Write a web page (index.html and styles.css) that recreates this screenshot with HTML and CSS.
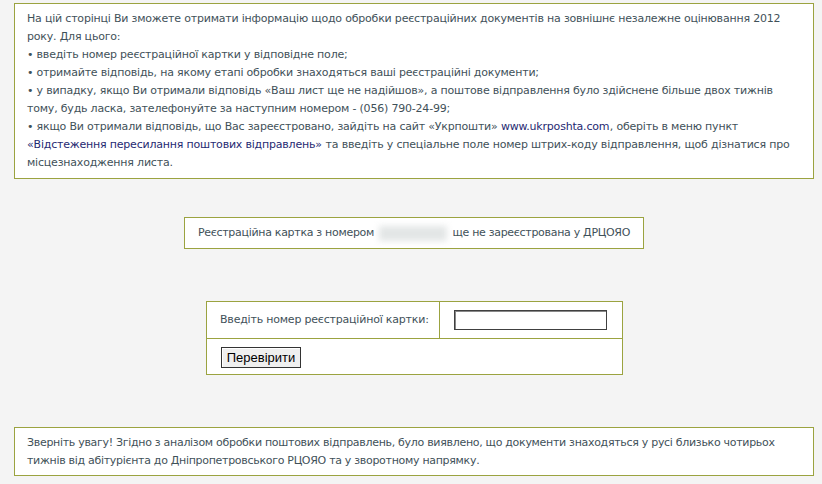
FILE: index.html
```html
<!DOCTYPE html>
<html lang="uk">
<head>
<meta charset="utf-8">
<title>Перевірка реєстраційної картки</title>
<link rel="stylesheet" href="styles.css">
</head>
<body>
<div class="page">
  <div class="box info">
    На цій сторінці Ви зможете отримати інформацію щодо обробки реєстраційних документів на зовнішнє незалежне оцінювання 2012 року. Для цього:<br>
    • введіть номер реєстраційної картки у відповідне поле;<br>
    • отримайте відповідь, на якому етапі обробки знаходяться ваші реєстраційні документи;<br>
    • у випадку, якщо Ви отримали відповідь «Ваш лист ще не надійшов», а поштове відправлення було здійснене більше двох тижнів тому, будь ласка, зателефонуйте за наступним номером - (056) 790-24-99;<br>
    • якщо Ви отримали відповідь, що Вас зареєстровано, зайдіть на сайт «Укрпошти» <a class="link" href="#">www.ukrposhta.com</a>, оберіть в меню пункт <span class="link">«Відстеження пересилання поштових відправлень»</span> та введіть у спеціальне поле номер штрих-коду відправлення, щоб дізнатися про місцезнаходження листа.
  </div>

  <div class="box status">Реєстраційна картка з номером <span class="blurred"></span> ще не зареєстрована у ДРЦОЯО</div>

  <table class="form">
    <tr>
      <td class="label">Введіть номер реєстраційної картки:</td>
      <td class="field"><input class="input" type="text"></td>
    </tr>
    <tr>
      <td class="actions" colspan="2"><button class="btn" type="button">Перевірити</button></td>
    </tr>
  </table>

  <div class="box note">Зверніть увагу! Згідно з аналізом обробки поштових відправлень, було виявлено, що документи знаходяться у русі близько чотирьох тижнів від абітурієнта до Дніпропетровського РЦОЯО та у зворотному напрямку.</div>
</div>
</body>
</html>
```

FILE: styles.css
```css
html, body {
  margin: 0;
  padding: 0;
  background: #f4f4f4;
}
.page {
  padding: 3px 8px 0 14px;
  font-family: "DejaVu Sans", Verdana, sans-serif;
  font-size: 11px;
  letter-spacing: -0.2px;
  line-height: 18px;
  color: #3f5159;
}
.box {
  background: #fff;
  border: 1px solid #9ba340;
  box-sizing: border-box;
}
.info {
  width: 800px;
  padding: 6px 12px 6px 12px;
}
.link {
  color: #1f2a72;
  text-decoration: none;
  margin-right: 0.5px;
}
.status {
  width: 460px;
  margin: 38px 0 0 170px;
  height: 32px;
  line-height: 30px;
  text-align: center;
  letter-spacing: -0.3px;
}
.blurred {
  display: inline-block;
  width: 68px;
  height: 15px;
  vertical-align: middle;
  background: #e3e6e6;
  filter: blur(3px);
  margin: 0 2px;
}
.form {
  margin: 52px 0 0 192px;
  width: 417px;
  border-collapse: collapse;
  background: #fff;
  border: 1px solid #9ba340;
}
.form td {
  border: 1px solid #9ba340;
  padding: 0;
}
.label {
  width: 219px;
  height: 36px;
  padding-left: 13px !important;
}
.field {
  padding-left: 14px !important;
}
.input {
  display: block;
  box-sizing: border-box;
  width: 153px;
  height: 20px;
  border: 1px solid #404040;
  box-shadow: inset 1px 1px 0 #888;
  padding: 0;
  margin: 0;
  background: #fff;
}
.actions {
  height: 35px;
  padding-left: 14px !important;
}
.btn {
  display: block;
  box-sizing: border-box;
  width: 80px;
  height: 21px;
  padding: 0;
  margin: 1px 0 0 0;
  font-family: "Liberation Sans", Arial, sans-serif;
  font-size: 13px;
  letter-spacing: 0;
  color: #000;
  background: #efefef;
  border: 1px solid #333;
  box-shadow: inset 1px 1px 0 #fff;
}
.note {
  width: 800px;
  margin-top: 52px;
  padding: 6px 6px 5px 12px;
  letter-spacing: -0.3px;
}
```
